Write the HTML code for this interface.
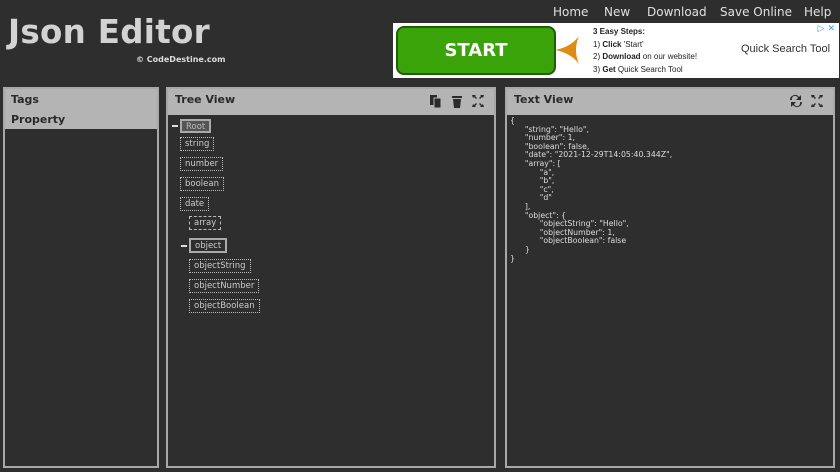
<!DOCTYPE html>
<html><head><meta charset="utf-8"><style>
*{margin:0;padding:0;box-sizing:border-box}
body{width:840px;height:472px;background:#2e2e2e;font-family:"DejaVu Sans","Liberation Sans",sans-serif;position:relative;overflow:hidden;color:#ddd}
.title{position:absolute;left:8px;top:13px;font-size:32.5px;font-weight:bold;color:#d2d2d2;letter-spacing:0.3px}
.copy{position:absolute;left:136px;top:55px;font-size:8px;font-weight:bold;color:#ddd}
.nav{position:absolute;top:5px;font-size:12px;color:#e0e0e0}
.ad{position:absolute;left:393px;top:23px;width:446px;height:55px;background:#fff}
.btn{position:absolute;left:3px;top:3px;width:160px;height:49px;border-radius:8px;background:#3aa30a;border:2px solid #1f5e06;color:#fff;font-weight:bold;font-size:18px;text-align:center;line-height:45px;font-family:"DejaVu Sans",sans-serif}
.steps{position:absolute;left:200px;top:3px;font-family:"Liberation Sans",sans-serif;font-size:8px;color:#222;line-height:12.7px}
.qs{position:absolute;left:348px;top:20px;font-family:"Liberation Sans",sans-serif;font-size:11px;color:#333}
.panel{position:absolute;top:87px;height:381px;border:2px solid #a8a8a8;background:#2e2e2e}
.hdr{background:#b4b4b4;height:26px;color:#2a2a2a;font-weight:bold;font-size:11px;padding:4px 0 0 7px}
.node{position:absolute;font-size:8.5px;color:#ccc;border:1px dotted #bbb;padding:1px 4px;height:14px;line-height:11px}
.txt{position:absolute;left:3px;top:28px;font-size:7.8px;line-height:8.6px;color:#ddd;white-space:pre;font-family:"DejaVu Sans",sans-serif}
.minus{position:absolute;width:6px;height:2px;background:#ddd}
</style></head><body>
<div class="title">Json Editor</div>
<div class="copy">© CodeDestine.com</div>
<div class="nav" style="left:553px">Home</div>
<div class="nav" style="left:604px">New</div>
<div class="nav" style="left:647px">Download</div>
<div class="nav" style="left:720px">Save Online</div>
<div class="nav" style="left:804px">Help</div>
<div class="ad">
 <div class="btn">START</div>
 <svg style="position:absolute;left:160px;top:12px" width="28" height="30"><path d="M26 1 Q18 12 2 15 Q18 18 26 29 Q20 15 26 1Z" fill="#e08a12"/></svg>
 <div class="steps"><b>3 Easy Steps:</b><br>1) <b>Click</b> 'Start'<br>2) <b>Download</b> on our website!<br>3) <b>Get</b> Quick Search Tool</div>
 <div class="qs">Quick Search Tool</div>
 <div style="position:absolute;right:4px;top:1px;font-size:9px;color:#3aa0e0">▷ ✕</div>
</div>
<div class="panel" style="left:3px;width:156px">
 <div style="background:#b4b4b4;height:40px;color:#2a2a2a;font-weight:bold;font-size:11px;padding:1px 0 0 6px;line-height:20px">Tags<br>Property</div>
</div>
<div class="panel" style="left:166px;width:330px">
 <div class="hdr">Tree View</div>
 <svg style="position:absolute;right:6px;top:4px" width="60" height="16" fill="#2a2a2a">
  <rect x="2" y="2" width="7" height="10"/><rect x="6" y="5" width="7" height="10" stroke="#b4b4b4" stroke-width="1"/>
  <rect x="24" y="3" width="10" height="2"/><path d="M25 6h8l-1 9h-6z"/>
  <path d="M44 2h4l-1 1 2 2-1 1-2-2-1 1zM56 2h-4l1 1-2 2 1 1 2-2 1 1zM44 14h4l-1-1 2-2-1-1-2 2-1-1zM56 14h-4l1-1-2-2 1-1 2 2 1-1z"/>
 </svg>
 <div class="minus" style="left:4px;top:36px"></div>
 <div class="node" style="left:12px;top:30px;border:2px solid #aaa;background:#555;color:#bbb;height:14px;line-height:10px">Root</div>
 <div class="node" style="left:12px;top:48px">string</div>
 <div class="node" style="left:12px;top:68px">number</div>
 <div class="node" style="left:12px;top:88px">boolean</div>
 <div class="node" style="left:12px;top:108px">date</div>
 <div class="node" style="left:21px;top:127px;border-style:dashed">array</div>
 <div class="minus" style="left:13px;top:156px"></div>
 <div class="node" style="left:21px;top:149px;border:2px solid #aaa;height:15px">object</div>
 <div class="node" style="left:21px;top:170px">objectString</div>
 <div class="node" style="left:21px;top:190px">objectNumber</div>
 <div class="node" style="left:21px;top:210px">objectBoolean</div>
</div>
<div class="panel" style="left:505px;width:330px">
 <div class="hdr">Text View</div>
 <svg style="position:absolute;right:6px;top:4px" width="40" height="16" fill="#2a2a2a">
  <path d="M3 7a5 5 0 0 1 9-3l2-2v5h-5l2-2a3 3 0 0 0-6 2zM15 9a5 5 0 0 1-9 3l-2 2V9h5l-2 2a3 3 0 0 0 6-2z"/>
  <path d="M24 2h4l-1 1 2 2-1 1-2-2-1 1zM36 2h-4l1 1-2 2 1 1 2-2 1 1zM24 14h4l-1-1 2-2-1-1-2 2-1-1zM36 14h-4l1-1-2-2 1-1 2 2 1-1z"/>
 </svg>
 <div class="txt">{
      "string": "Hello",
      "number": 1,
      "boolean": false,
      "date": "2021-12-29T14:05:40.344Z",
      "array": [
            "a",
            "b",
            "c",
            "d"
      ],
      "object": {
            "objectString": "Hello",
            "objectNumber": 1,
            "objectBoolean": false
      }
}</div>
</div>
</body></html>
